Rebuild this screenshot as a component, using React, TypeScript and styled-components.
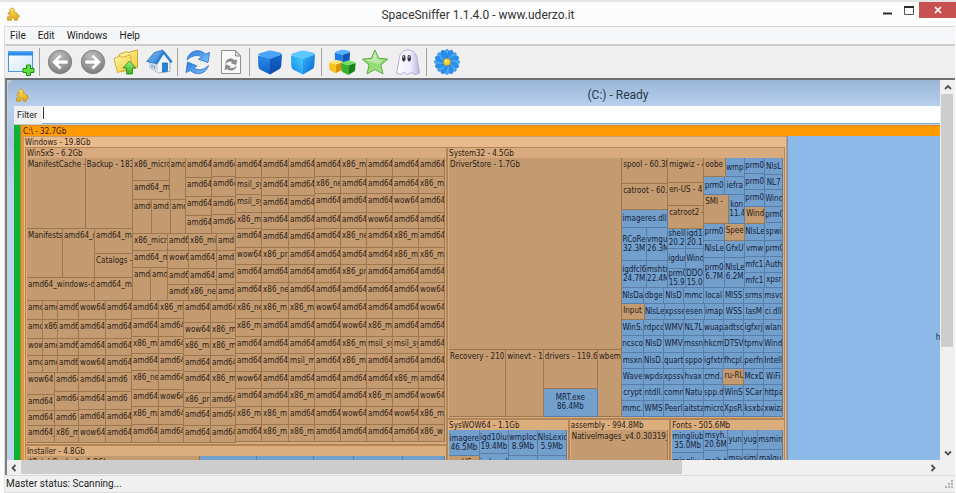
import React from 'react';
import styled, { createGlobalStyle, css } from 'styled-components';

const uiFont = 'Roboto, "Open Sans", sans-serif';
const mapFont = '"DejaVu Sans Condensed", "DejaVu Sans", sans-serif';

const GlobalStyle = createGlobalStyle`
  *, *::before, *::after { box-sizing: border-box; }
  html, body { margin: 0; padding: 0; }
  body { background: #f0f0f0; font-family: ${uiFont}; color: #1d1d1d; }
  button, input { font: inherit; color: inherit; border: 0; padding: 0; margin: 0; background: none; border-radius: 0; }
  button { cursor: default; }
`;

/* ---------- application frame ---------- */

const Frame = styled.div`
  display: flex;
  flex-direction: column;
  height: 100vh;
  overflow: hidden;
  border-top: 2px solid #e4e4e4;
  background: #fcfcfc;
`;

const TitleBar = styled.header`
  display: grid;
  grid-template-columns: 80px 1fr 80px;
  align-items: start;
  height: 24px;
  flex: none;
`;

const TitleIcon = styled.div`
  padding: 5px 0 0 6px;
  line-height: 0;
`;

const Title = styled.h1`
  margin: 0;
  padding-top: 4px;
  text-align: center;
  font-size: 12px;
  font-weight: 400;
  line-height: 18px;
  color: #333;
`;

const WindowButtons = styled.div`
  display: flex;
  justify-content: flex-end;
  height: 16px;
`;

const WindowButton = styled.button<{ $close?: boolean }>`
  display: flex;
  align-items: center;
  justify-content: center;
  width: ${p => (p.$close ? 37 : 21)}px;
  background: ${p => (p.$close ? '#c75050' : 'transparent')};
`;

const Client = styled.div`
  display: flex;
  flex-direction: column;
  flex: 1;
  min-height: 0;
  margin: 0 1px 0 4px;
  border-left: 1px solid #dcdfe2;
  border-top: 1px solid #d5d8da;
`;

const MenuBar = styled.nav`
  display: flex;
  flex: none;
  height: 17px;
  background: #f5f6f8;
`;

const MenuItem = styled.button`
  padding: 0 5px;
  margin-right: 2px;
  font-size: 10px;
  line-height: 16px;
`;

const Toolbar = styled.div`
  display: flex;
  align-items: center;
  flex: none;
  height: 34px;
  border-top: 2px solid #cbcccd;
  background: #efefef;
`;

const ToolButton = styled.button`
  display: flex;
  align-items: center;
  justify-content: center;
  width: 33px;
  height: 30px;
  padding: 0 2px 1px 0;
`;

const Separator = styled.span`
  width: 1px;
  height: 28px;
  margin: 0 4px 0 1px;
  background: #a3a3a3;
`;

/* ---------- workspace with its scroll bars ---------- */

const Workspace = styled.main`
  display: grid;
  grid-template-columns: minmax(0, 1fr) 15px;
  grid-template-rows: minmax(0, 1fr) 15px;
  flex: 1;
  min-height: 0;
  border-top: 2px solid #6c6f73;
  border-left: 2px solid #7d8083;
  background: #f0f0f0;
`;

const Viewport = styled.div`
  overflow: hidden;
  background: #c9cdd2;
`;

const ScrollBar = styled.div<{ $vertical?: boolean }>`
  display: flex;
  flex-direction: ${p => (p.$vertical ? 'column' : 'row')};
  background: #f0f0f0;
`;

const ScrollArrow = styled.button`
  display: flex;
  align-items: center;
  justify-content: center;
  flex: 0 0 14px;
`;

const ScrollTrack = styled.div<{ $vertical?: boolean }>`
  display: flex;
  flex: 1;
  flex-direction: ${p => (p.$vertical ? 'column' : 'row')};
  ${p => (p.$vertical ? 'padding: 0 2px 0 1px;' : 'padding-bottom: 1px;')}
`;

const Thumb = styled.div<{ $share: number }>`
  flex: 0 0 ${p => p.$share}%;
  background: #cdcdcd;
`;

const StatusBar = styled.footer`
  display: flex;
  align-items: center;
  justify-content: space-between;
  flex: none;
  height: 18px;
  padding: 0 1px;
  border-top: 1px solid #dadada;
  border-bottom: 1px solid #dcdcdc;
  background: #f0f0f0;
  font-size: 10px;
  line-height: 16px;
`;

/* ---------- drive window ---------- */

const ChildWindow = styled.section`
  width: 1220px;
  margin-left: 1px;
  padding: 0 6px 6px;
  border-radius: 6px 0 0 0;
  background: linear-gradient(#9ab6d4, #b6d0ee 26px, #a9c4e2 60px, #bdd3ec 110px);
`;

const ChildTitle = styled.header`
  display: grid;
  grid-template-columns: 80px 1fr 80px;
  align-items: center;
  height: 26px;
  padding-top: 4px;
`;

const ChildIcon = styled.div`
  padding-left: 1px;
  line-height: 0;
`;

const ChildName = styled.h2`
  margin: 0;
  text-align: center;
  font-size: 12px;
  font-weight: 400;
  line-height: 18px;
  color: #27384a;
`;

const FilterRow = styled.div`
  display: flex;
  height: 19px;
  background: #fff;
  border-bottom: 1px solid #c9c9c9;
`;

const FilterLabel = styled.label`
  width: 28px;
  padding-left: 3px;
  background: #f0f0f0;
  font-size: 9px;
  line-height: 18px;
`;

const FilterField = styled.div`
  display: flex;
  flex: 1;
  padding: 1px 0 0 1px;
  border-bottom: 1px solid #7fb0dc;
`;

const Caret = styled.span`
  width: 1px;
  height: 12px;
  background: #333;
`;

const FilterInput = styled.input`
  flex: 1;
  font-size: 10px;
  outline: none;
`;

const DriveArea = styled.div`
  display: flex;
  height: 425px;
`;

const FreeSpaceBar = styled.div`
  width: 7px;
  border-right: 1px solid #7fa050;
  background: #10b12f;
`;

/* ---------- treemap ---------- */

type Kind = 'dir' | 'file';
type Tone = 'drive' | 'outer' | 'inner' | 'deep';
type MapNode =
  | { type: 'split'; size: number; dir: 'row' | 'column'; kids: MapNode[] }
  | { type: 'folder'; size: number; label: string; tone: Tone; kids: MapNode[] }
  | { type: 'cell'; size: number; kind: Kind; label?: string; sub?: string };

const grow = css<{ $size: number }>`
  flex: ${p => p.$size} ${p => p.$size} 0px;
  min-width: 0;
  min-height: 0;
`;

const Split = styled.div<{ $size: number; $dir: 'row' | 'column' }>`
  ${grow}
  display: flex;
  flex-direction: ${p => p.$dir};
`;

const tones: Record<Tone, { fill: string; line: string }> = {
  drive: { fill: '#ff9a05', line: '#dd9030' },
  outer: { fill: '#e9ba8b', line: '#c8986a' },
  inner: { fill: '#d8aa7d', line: '#b08658' },
  deep: { fill: '#dcad7d', line: '#b08658' },
};

const Folder = styled.div<{ $size: number; $tone: Tone }>`
  ${grow}
  display: flex;
  flex-direction: column;
  padding: 0 2px 2px;
  background: ${p => tones[p.$tone].fill};
  box-shadow: inset 0 0 0 1px ${p => tones[p.$tone].line};
`;

const FolderName = styled.div`
  flex: none;
  height: 11px;
  padding-top: 2px;
  white-space: nowrap;
  font-size: 8px;
  line-height: 9px;
`;

const FolderBody = styled.div`
  display: flex;
  flex: 1;
  min-height: 0;
`;

const Cell = styled.div<{ $size: number; $kind: Kind }>`
  ${grow}
  display: flex;
  flex-direction: column;
  justify-content: ${p => (p.$kind === 'file' ? 'center' : 'flex-start')};
  overflow: hidden;
  white-space: nowrap;
  font-size: 8px;
  line-height: 9px;
  text-align: ${p => (p.$kind === 'file' ? 'center' : 'left')};
  padding: ${p => (p.$kind === 'file' ? '0' : '2px 0 0 1px')};
  color: ${p => (p.$kind === 'file' ? '#14233a' : '#2b2014')};
  background: ${p => (p.$kind === 'file' ? '#739fcd' : '#c49b71')};
  border: solid ${p => (p.$kind === 'file' ? '#587fa9' : '#9c7850')};
  border-width: 0 1px 1px 0;
`;

const CellName = styled.span`
  flex: none;
  overflow: hidden;
`;

const BigFile = styled.div<{ $size: number }>`
  ${grow}
  display: flex;
  flex-direction: column;
  align-items: center;
  justify-content: center;
  border-left: 1px solid #6c95bf;
  background: #8cb9e8;
  font-size: 8px;
  line-height: 9px;
  color: #1c2c40;
`;

const DriveMap = styled.div`
  display: flex;
  flex: 1;
  min-width: 0;
  font-family: ${mapFont};
  color: #2b2014;
`;

const row = (size: number, ...kids: MapNode[]): MapNode => ({ type: 'split', size, dir: 'row', kids });
const col = (size: number, ...kids: MapNode[]): MapNode => ({ type: 'split', size, dir: 'column', kids });
const dir = (size: number, label?: string): MapNode => ({ type: 'cell', size, kind: 'dir', label });
const file = (size: number, label?: string, sub?: string): MapNode => ({ type: 'cell', size, kind: 'file', label, sub });
const folder = (size: number, label: string, tone: Tone, ...kids: MapNode[]): MapNode => ({
  type: 'folder', size, label, tone, kids,
});

/* A column of equal-width cells; names starting with "*" are folders among files. */
const stack = (size: number, kind: Kind, heights: number[], names: string): MapNode =>
  col(
    size,
    ...names.split(' ').map((name, i): MapNode =>
      name.startsWith('*')
        ? dir(heights[i], name.slice(1))
        : { type: 'cell', size: heights[i], kind, label: name }
    )
  );

const line = (height: number, names: string): MapNode => {
  const widths = [22, 20, 20, 20, 20, 20, 20, 19];
  return row(
    height,
    ...names.split(' ').map((name, i) => (name.startsWith('*') ? dir(widths[i], name.slice(1)) : file(widths[i], name)))
  );
};

const upperA = [20, 17, 18, 16, 19, 17, 18, 18];
const upperB = [21, 17, 17, 17, 18, 17, 18, 18];
const upperC = [19, 17, 19, 16, 19, 17, 18, 18];
const lower = [18, 18, 17, 18, 17, 18, 18, 17];
const leftLow = [19, 19, 17, 17, 19, 18, 16, 16];
const midLow = [18, 18, 17, 17, 19, 17, 18, 17];
const sideLow = [22, 16, 17, 16, 21, 15, 18, 16];

const winSxS = folder(
  297, 'WinSxS - 6.2Gb', 'inner',
  col(
    209,
    row(
      143,
      col(
        106,
        row(71, dir(59, 'ManifestCache -'), dir(47, 'Backup - 183')),
        row(
          72,
          col(68, row(51, dir(36, 'Manifests'), dir(32, 'amd64_m')), dir(21, 'amd64_windows-d')),
          col(38, dir(25, 'amd64_mi'), dir(24, 'Catalogs -'), dir(23, 'amd64_mi'))
        )
      ),
      col(
        103,
        row(
          76,
          col(
            53,
            row(42, stack(38, 'dir', [23, 19], 'x86_micro amd64_m'), dir(15, 'amd')),
            row(34, dir(19, 'amd6'), dir(19, 'amd'), dir(15, 'amd'))
          ),
          stack(26, 'dir', [20, 19, 19, 18], 'amd64 amd64 amd64 amd64'),
          stack(24, 'dir', [19, 20, 18, 19], 'amd64 amd64 amd64 amd64')
        ),
        row(
          67,
          col(35, stack(34, 'dir', [17, 17], 'x86_micr amd64_m'), row(33, dir(18, 'amd'), dir(17, 'amd'))),
          stack(21, 'dir', [17, 18, 16, 16], 'amd6 wow6 amd6 amd6'),
          stack(28, 'dir', [17, 18, 16, 16], 'x86_mi amd64_ amd64_ x86_net'),
          stack(19, 'dir', [17, 18, 16, 16], 'amd amd amd amd')
        )
      )
    ),
    row(
      141,
      col(
        52,
        row(
          72,
          stack(16, 'dir', [19, 19, 17, 17], 'amc amc wow amc'),
          stack(15, 'dir', [19, 19, 17, 17], 'amc x86 amc amc'),
          stack(21, 'dir', [19, 19, 17, 17], 'amd6 amd6 amd6 amd6')
        ),
        row(
          69,
          stack(28, 'dir', [22, 16, 15, 16], 'wow64 amd64_ amd64_ amd64_'),
          stack(24, 'dir', [19, 19, 15, 16], 'amd64 amd64 amd6 x86_m')
        )
      ),
      stack(27, 'dir', leftLow, 'wow64 amd64 amd64_ wow64 amd64_ amd64_ amd64 wow64'),
      stack(26, 'dir', leftLow, 'amd64 amd64 amd64 amd64 amd6 amd6 amd64 amd64'),
      stack(27, 'dir', midLow, 'amd64_ amd64_ x86_mi amd64_ x86_ne amd64_ x86_mi amd64_'),
      stack(25, 'dir', midLow, 'x86_m amd64 amd64 amd64 amd64 wow64 amd64 amd64'),
      stack(27, 'dir', sideLow, 'amd64 wow64 x86_mi amd64_ amd64_ x86_pr amd64_ amd64_'),
      stack(25, 'dir', sideLow, 'amd64 x86_m x86_m amd64 x86_m amd64 amd64 amd64')
    )
  ),
  stack(26, 'dir', [...upperA, ...lower],
    'amd64_ msil_sy msil_sy x86_mi amd64_ wow64 amd64_ amd64_ x86_ne x86_mi amd64_ amd64_ wow64 amd64_ x86_mi amd64_'),
  stack(27, 'dir', [...upperB, ...lower],
    'amd64 amd64 amd64 amd64 amd64 x86_pr amd64 x86_ne x86_m amd64 amd64 amd64 amd64 amd64 x86_m x86_m'),
  stack(26, 'dir', [...upperB, ...lower],
    'amd64_ amd64_ amd64_ amd64_ amd64_ amd64_ amd64_ amd64_ x86_m amd64 amd64 msil_m amd64 x86_m amd64 x86_m'),
  stack(26, 'dir', [...upperC, ...lower],
    'amd64 x86_ne amd64 amd64 amd64 amd64 amd64 amd64 wow64 amd64 amd64 amd64 amd64 amd64 amd64 amd64'),
  stack(26, 'dir', [...upperC, ...lower],
    'x86_mi amd64_ amd64_ amd64_ x86_ne amd64_ x86_pn amd64_ amd64_ wow64 x86_mi x86_mi amd64_ amd64_ wow64 amd64_'),
  stack(26, 'dir', [...upperC, ...lower],
    'amd64 amd64 amd64 wow64 amd64 amd64 amd64 amd64 amd64 x86_m msil_sy amd64 amd64 x86_m amd64 amd64'),
  stack(26, 'dir', [...upperC, ...lower],
    'amd64 amd64 wow64 amd64 x86_m x86_m amd64_ amd64_ amd64 amd64 msil_sy amd64 x86_m amd64 wow64 amd64'),
  stack(26, 'dir', [...upperC, ...lower],
    'amd64 x86_m amd64 amd64 amd64 x86_m amd64 wow64 wow64 amd64 amd64 amd64 amd64 wow64 x86_m x86_w')
);

const installer = folder(
  100, 'Installer - 4.8Gb', 'deep',
  dir(174, '$PatchCache$ - 1.8Gb'), file(57), file(57), file(39), file(49), file(42)
);

const system32 = folder(
  270, 'System32 - 4.5Gb', 'inner',
  col(
    173,
    dir(190, 'DriverStore - 1.7Gb'),
    row(
      67,
      dir(57, 'Recovery - 210.'),
      dir(37, 'winevt - 1'),
      col(56, dir(38, 'drivers - 119.6M'), file(29, 'MRT.exe', '86.4Mb')),
      dir(23, 'wbem')
    )
  ),
  col(
    161,
    row(
      129,
      col(
        46,
        dir(24, 'spool - 60.3M'),
        dir(24, 'catroot - 60.3'),
        file(18, 'imageres.dll'),
        row(35, file(25, 'RCoRe', '32.3M'), file(21, 'vmgu', '26.3M')),
        row(28, file(25, 'igdfcl6', '24.7M'), file(21, 'mshtr', '22.4M'))
      ),
      col(
        36,
        dir(23, 'migwiz - 4'),
        dir(22, 'en-US - 4'),
        dir(21, 'catroot2 -'),
        row(21, file(18, 'shell', '20.2'), file(18, 'igd1', '20.1')),
        row(22, file(18, 'igdur'), file(18, 'Wind')),
        row(20, file(18, 'prm0', '15.9'), file(18, 'DDO', '15.0'))
      ),
      col(
        41,
        row(19, dir(21, 'oobe'), file(20, 'wmp')),
        row(18, file(21, 'prm0'), file(20, 'iefra')),
        row(28, dir(25, 'SMI -'), file(16, 'kon', '11.4')),
        row(17, file(21, 'prm0'), dir(20, 'Spee')),
        row(17, file(21, 'NlsLe'), file(20, 'GfxU')),
        row(30, file(21, 'prm0', '6.7M'), file(20, 'NlsLe', '6.2M'))
      ),
      stack(20, 'file', [16, 16, 17, 15, 18, 16, 16, 15], 'prm0 prm0 prm0 *Wind NlsLe vmw mfc11 mfc11'),
      stack(18, 'file', [17, 15, 17, 16, 17, 16, 16, 15], 'NlsL NL7 Wind prm0 spwi prm0 Auth xpsr')
    ),
    line(16, 'NlsDa dbge NlsD mmc local MISS srms msvc'),
    line(16, '*Input NlsLe xpsse esen imap WSS IasM ci.dll'),
    line(16, 'WinS. rdpcc WMV NL7L wuap adtsc igfxrj wlan'),
    line(16, 'ncsco NlsD WMV mssn hkcm DTSV tpmv Wind'),
    line(16, 'msxn NlsD. quart sppo igfxtr fhcpl. perfn Intelli'),
    line(16, 'Wave wpds xpssv hvax cmd. *ru-RU McxD WiFi'),
    line(16, 'crypt ntdll. comn Natu spp.d WinS SCar httpa'),
    line(16, 'mmc. WMS Peerl aitsta micro XpsR. ksxba xwiza')
  )
);

const sysWow = folder(
  122, 'SysWOW64 - 1.1Gb', 'deep',
  col(31, file(26, 'imagere', '46.5Mb'), dir(88, 'en-US')),
  col(29, file(24, 'igd10iur', '19.4Mb'), file(17, 'igdumdi'), file(73)),
  col(29, file(25, 'wmploc', '8.9Mb'), file(89)),
  col(29, file(25, 'NlsLexic', '5.9Mb'), file(89))
);

const assembly = folder(101, 'assembly - 994.8Mb', 'deep', dir(97, 'NativeImages_v4.0.30319_'));

const fonts = folder(
  115, 'Fonts - 505.6Mb', 'deep',
  col(32, file(23, 'mingliub.', '35.0Mb'), file(17, 'mingliu_m'), file(74)),
  col(24, file(21, 'msyh.', '20.6M'), file(20, 'msjh.t'), file(73)),
  col(15, file(19, 'yun'), file(18, 'msy'), file(77)),
  col(15, file(19, 'yug'), file(18, 'simli'), file(77)),
  col(25, file(19, 'msmin'), file(18, 'malgu'), file(77))
);

const windows = folder(
  764, 'Windows - 19.8Gb', 'outer',
  col(422, winSxS, installer),
  col(338, system32, row(127, sysWow, assembly, fonts))
);

function MapView({ node }: { node: MapNode }) {
  if (node.type === 'split') {
    return (
      <Split $size={node.size} $dir={node.dir}>
        {node.kids.map((k, i) => <MapView key={i} node={k} />)}
      </Split>
    );
  }
  if (node.type === 'folder') {
    return (
      <Folder $size={node.size} $tone={node.tone}>
        <FolderName>{node.label}</FolderName>
        <FolderBody>{node.kids.map((k, i) => <MapView key={i} node={k} />)}</FolderBody>
      </Folder>
    );
  }
  return (
    <Cell $size={node.size} $kind={node.kind}>
      {node.label && <CellName>{node.label}</CellName>}
      {node.sub && <CellName>{node.sub}</CellName>}
    </Cell>
  );
}

/* ---------- icons ---------- */

const Svg = ({ size = 28, children }: { size?: number; children: React.ReactNode }) => (
  <svg width={size} height={size} viewBox={`0 0 ${size} ${size}`} aria-hidden="true">{children}</svg>
);

const HiddenDefs = styled.svg`
  display: block;
`;

const Gradients = () => (
  <HiddenDefs width="0" height="0" aria-hidden="true">
    <defs>
      <linearGradient id="gold" x1="0" y1="0" x2="0" y2="1"><stop offset="0" stopColor="#ffe65a" /><stop offset="1" stopColor="#dda51c" /></linearGradient>
      <linearGradient id="pale" x1="0" y1="0" x2="1" y2="1"><stop offset="0" stopColor="#ffffff" /><stop offset="1" stopColor="#cfe6fb" /></linearGradient>
      <radialGradient id="grey" cx="0.45" cy="0.3" r="0.7"><stop offset="0" stopColor="#c2c2c2" /><stop offset="1" stopColor="#7d7d7d" /></radialGradient>
      <linearGradient id="folder" x1="0" y1="0" x2="1" y2="1"><stop offset="0" stopColor="#fff6a8" /><stop offset="1" stopColor="#eec93c" /></linearGradient>
      <linearGradient id="leaf" x1="0" y1="0" x2="0" y2="1"><stop offset="0" stopColor="#a6f07a" /><stop offset="1" stopColor="#2fae22" /></linearGradient>
      <linearGradient id="arrow" x1="0" y1="0" x2="1" y2="1"><stop offset="0" stopColor="#2b7ae0" /><stop offset="1" stopColor="#7cc2fb" /></linearGradient>
      <linearGradient id="roof" x1="0" y1="0" x2="1" y2="1"><stop offset="0" stopColor="#7dbcf5" /><stop offset="1" stopColor="#2f80d6" /></linearGradient>
      <linearGradient id="star" x1="0" y1="0" x2="0" y2="1"><stop offset="0" stopColor="#d2f3bf" /><stop offset="0.5" stopColor="#8bd96c" /><stop offset="1" stopColor="#a5e488" /></linearGradient>
      <linearGradient id="ghost" x1="0" y1="0" x2="1" y2="0"><stop offset="0" stopColor="#ffffff" /><stop offset="0.6" stopColor="#eeecfc" /><stop offset="1" stopColor="#b9b4e2" /></linearGradient>
      <linearGradient id="cubeLeft" x1="0" y1="0" x2="0" y2="1"><stop offset="0" stopColor="#2c8bea" /><stop offset="1" stopColor="#0f62c8" /></linearGradient>
      <linearGradient id="cubeRight" x1="0" y1="0" x2="0" y2="1"><stop offset="0" stopColor="#1367cc" /><stop offset="1" stopColor="#0b48a4" /></linearGradient>
      <linearGradient id="glowLeft" x1="0" y1="1" x2="1" y2="0"><stop offset="0" stopColor="#0b84ee" /><stop offset="1" stopColor="#4fd0ff" /></linearGradient>
      <linearGradient id="glowRight" x1="1" y1="1" x2="0" y2="0"><stop offset="0" stopColor="#0863cf" /><stop offset="1" stopColor="#35b4fb" /></linearGradient>
    </defs>
  </HiddenDefs>
);

const PuzzleIcon = () => (
  <Svg size={14}>
    <path d="M4.500 5.500C3 3 4 1.200 6 1.200S9 3 8 5.300l2.800.5.200 2c1.500-.4 2.300.4 2.300 1.500s-.8 1.700-2 1.500v2.400H8.300c.3-1.600-.2-2.400-1.300-2.400s-1.600.8-1.400 2.400H1.500V9.800c1.700.2 2.300-.4 2.300-1.200S3.200 7.300 2 7.500l.2-1.800z" fill="url(#gold)" stroke="#c79420" strokeWidth="0.8" />
  </Svg>
);

const NewWindowIcon = () => (
  <Svg>
    <rect x="1.500" y="3.500" width="24" height="20" fill="url(#pale)" stroke="#4b93da" />
    <rect x="1" y="3" width="25" height="4.500" fill="#2f8be6" />
    <rect x="1" y="3" width="25" height="1.500" fill="#56abf5" />
    <path d="M19.500 17h4v3.500H27v4h-3.500V27.500h-4v-3H16v-4h3.500z" fill="#5ee03a" stroke="#1d8c1d" />
  </Svg>
);

const CircleArrow = ({ forward }: { forward?: boolean }) => (
  <Svg>
    <circle cx="14" cy="14" r="11.700" fill="url(#grey)" stroke="#777" strokeWidth="0.8" />
    <path
      transform={forward ? 'rotate(180 14 14)' : undefined}
      d="M13.600 6.200 5.800 14l7.800 7.800 2.300-2.300-3.400-3.500H22v-4h-9.500l3.400-3.500z" fill="#fff" stroke="#8d8d8d" strokeWidth="0.6" />
  </Svg>
);

const FolderUpIcon = () => (
  <Svg>
    <path d="M7 6.500 14.500 3.500l1.500 1L25.500 2v17.500L9 24z" fill="url(#folder)" stroke="#d3a62b" />
    <path d="M2 10.500 8 8l2 1.500 8.500-2.500 1.500 13L5.500 24.500z" fill="url(#folder)" stroke="#d9b03a" />
    <path d="m17.500 13 6.500 7h-3.500v6h-6v-6H11z" fill="url(#leaf)" stroke="#2b9420" strokeWidth="0.9" />
  </Svg>
);

const HomeIcon = () => (
  <Svg>
    <path d="M4.500 12v7.500L13 25l12-1.500V12L18 4z" fill="#eef2f7" stroke="#9aa6b3" strokeWidth="0.8" />
    <path d="M4.500 12v7.500L13 25V13z" fill="#d3dce6" />
    <path d="m1.500 13.500 8-9L18 2l-7 13.500z" fill="url(#roof)" stroke="#2b6fb8" strokeWidth="0.8" strokeLinejoin="round" />
    <path d="m11.500 15 7-11L26 13.500" fill="none" stroke="#2f7fd3" strokeWidth="2.600" strokeLinejoin="round" strokeLinecap="round" />
    <path d="M17.500 15h5v8.300l-5 .7z" fill="#2583de" stroke="#1c62a8" strokeWidth="0.7" />
    <path d="M7 16.500v3.500M9.500 17.500V21" stroke="#6d9dcb" strokeWidth="1.200" />
  </Svg>
);

const RefreshShape = ({ fill, stroke }: { fill: string; stroke: string }) => (
  <>
    <path d="M3 12C4 5.500 10 1.500 16 3c2.200.5 4 1.500 5.300 3l4.200-1.500-1.500 10-9.500-3.300 3.200-2.200C14.500 6.500 8 7 3 12z" fill={fill} stroke={stroke} strokeWidth="0.8" />
    <path d="M24.500 17.500C23 23.500 17 27 11 25.200c-2-.6-3.500-1.500-4.700-2.700L2 24.500 3.500 14l9.500 4-3.300 1.900c3.800 2.800 9.800 2.600 14.800-2.400z" fill={fill} stroke={stroke} strokeWidth="0.8" />
  </>
);

const RefreshIcon = () => <Svg><RefreshShape fill="url(#arrow)" stroke="#2a72c4" /></Svg>;

const PageRefreshIcon = () => (
  <Svg>
    <path d="M4.500 2.500h14l5 5.500v17.500h-19z" fill="#fafafa" stroke="#8d8d8d" />
    <path d="M18.500 2.500V8h5z" fill="#ddd" stroke="#8d8d8d" />
    <g transform="translate(7 9.500) scale(0.5)"><RefreshShape fill="#8c8c8c" stroke="#666" /></g>
  </Svg>
);

const CubeShape = ({ top, left, right }: { top: string; left: string; right: string }) => (
  <>
    <path d="M14 26.500 4 21.500Q2.500 20.500 2.300 18L2 7.500 14 10z" fill={left} />
    <path d="M14 26.500 23.500 21Q25 20 25.300 17.500L26 6.500 14 10z" fill={right} />
    <path d="M2 7q0-1 2-1.700l8-2.500q2-.5 4 0l8.500 2q1.500.5 1.500 1.700L14 11z" fill={top} />
  </>
);

const CubeIcon = () => <Svg><CubeShape top="#4ba4f7" left="url(#cubeLeft)" right="url(#cubeRight)" /></Svg>;

const GlowCubeIcon = () => (
  <Svg><CubeShape top="#5cc8ff" left="url(#glowLeft)" right="url(#glowRight)" /></Svg>
);

const CubesIcon = () => (
  <Svg>
    <g transform="translate(5.500 0) scale(0.64)"><CubeShape top="#5ab0ff" left="#1e7be2" right="#0e57b8" /></g>
    <g transform="translate(0 10.500) scale(0.56)"><CubeShape top="#ffe477" left="#fbc31f" right="#dc9407" /></g>
    <g transform="translate(12 11) scale(0.6)"><CubeShape top="#74dd6a" left="#36b32f" right="#1a821c" /></g>
  </Svg>
);

const StarIcon = () => (
  <Svg>
    <path d="m14 2 3.600 8.300 9 .8-6.700 6L22 26l-8-4.600L6 26l2-8.900-6.700-6 9-.8z" fill="url(#star)" stroke="#5aa945" strokeLinejoin="round" />
    <path d="m14 5.500 2.600 6 6 .6-4.600 3.900L8 14l-3-2.400 6.400-.2z" fill="#fff" opacity="0.35" />
  </Svg>
);

const GhostIcon = () => (
  <Svg>
    <path d="M5 13C5 6 8.500 2 14 2s9 4 9.500 11l2 12-4.500 1.500-3.500-2-4 2-4-2-3 2L2.500 25z" fill="url(#ghost)" stroke="#aaa5d4" strokeWidth="0.9" />
    <ellipse cx="9.800" cy="10.300" rx="1.700" ry="3.300" fill="#35354a" />
    <ellipse cx="15.200" cy="10.300" rx="1.700" ry="3.300" fill="#35354a" />
    <circle cx="9.500" cy="9" r="0.7" fill="#fff" />
    <circle cx="15" cy="9" r="0.7" fill="#fff" />
  </Svg>
);

const FlowerIcon = () => (
  <Svg>
    <circle cx="14" cy="14" r="11" fill="#2c8eea" />
    {Array.from({ length: 16 }, (_, i) => (
      <ellipse key={i} cx="14" cy="6.500" rx="2.400" ry="5.200" fill={i % 2 ? '#2a8eec' : '#48a8f6'} stroke="#1c74d0" strokeWidth="0.4" transform={`rotate(${i * 22.5} 14 14)`} />
    ))}
    <circle cx="14" cy="14" r="3.500" fill="#f6d02c" stroke="#b99312" strokeWidth="0.6" />
    <circle cx="13" cy="13" r="1.200" fill="#fff0a0" />
  </Svg>
);

const chevrons = { up: 'M2 7 5 4l3 3', down: 'M2 3.500l3 3 3-3', left: 'M6.500 2l-3 3 3 3', right: 'M3.500 2l3 3-3 3' };
const Chevron = ({ to }: { to: keyof typeof chevrons }) => (
  <Svg size={10}><path d={chevrons[to]} fill="none" stroke="#505050" strokeWidth="1.800" /></Svg>
);

const tools: { name: string; icon: React.ReactNode; group?: boolean }[] = [
  { name: 'New view', icon: <NewWindowIcon />, group: true },
  { name: 'Back', icon: <CircleArrow /> },
  { name: 'Forward', icon: <CircleArrow forward /> },
  { name: 'Parent folder', icon: <FolderUpIcon /> },
  { name: 'Home', icon: <HomeIcon />, group: true },
  { name: 'Rescan', icon: <RefreshIcon /> },
  { name: 'Refresh file', icon: <PageRefreshIcon />, group: true },
  { name: 'Less detail', icon: <CubeIcon /> },
  { name: 'More detail', icon: <GlowCubeIcon />, group: true },
  { name: 'File classes', icon: <CubesIcon /> },
  { name: 'Free space', icon: <StarIcon /> },
  { name: 'Unknown space', icon: <GhostIcon />, group: true },
  { name: 'Configure', icon: <FlowerIcon /> },
];

export default function App() {
  return (
    <>
      <GlobalStyle />
      <Gradients />
      <Frame>
        <TitleBar>
          <TitleIcon><PuzzleIcon /></TitleIcon>
          <Title>SpaceSniffer 1.1.4.0 - www.uderzo.it</Title>
          <WindowButtons>
            <WindowButton aria-label="Minimize">
              <Svg size={12}><path d="M1 9.500h9" stroke="#2a2a2a" strokeWidth="2" /></Svg>
            </WindowButton>
            <WindowButton aria-label="Maximize">
              <Svg size={12}><path d="M1.500 2v8.500h9V2" fill="none" stroke="#555" /><path d="M1 3h10" stroke="#2a2a2a" strokeWidth="2" /></Svg>
            </WindowButton>
            <WindowButton $close aria-label="Close">
              <Svg size={10}><path d="m2 2 6 6M8 2 2 8" stroke="#fff" strokeWidth="1.700" /></Svg>
            </WindowButton>
          </WindowButtons>
        </TitleBar>
        <Client>
          <MenuBar>
            {['File', 'Edit', 'Windows', 'Help'].map(m => <MenuItem key={m}>{m}</MenuItem>)}
          </MenuBar>
          <Toolbar role="toolbar">
            {tools.map(t => (
              <React.Fragment key={t.name}>
                <ToolButton aria-label={t.name}>{t.icon}</ToolButton>
                {t.group && <Separator />}
              </React.Fragment>
            ))}
          </Toolbar>
          <Workspace>
            <Viewport>
              <ChildWindow>
                <ChildTitle>
                  <ChildIcon><PuzzleIcon /></ChildIcon>
                  <ChildName>(C:) - Ready</ChildName>
                </ChildTitle>
                <FilterRow>
                  <FilterLabel htmlFor="filter">Filter</FilterLabel>
                  <FilterField>
                    <Caret />
                    <FilterInput id="filter" type="text" />
                  </FilterField>
                </FilterRow>
                <DriveArea>
                  <FreeSpaceBar />
                  <DriveMap>
                    <Folder $size={1} $tone="drive">
                      <FolderName>C:\ - 32.7Gb</FolderName>
                      <FolderBody>
                        <MapView node={windows} />
                        <BigFile $size={336}>
                          <span>hiberfil.sys</span>
                          <span>6.3Gb</span>
                        </BigFile>
                        <BigFile $size={97} />
                      </FolderBody>
                    </Folder>
                  </DriveMap>
                </DriveArea>
              </ChildWindow>
            </Viewport>
            <ScrollBar $vertical>
              <ScrollArrow aria-label="Scroll up"><Chevron to="up" /></ScrollArrow>
              <ScrollTrack $vertical><Thumb $share={72} /></ScrollTrack>
              <ScrollArrow aria-label="Scroll down"><Chevron to="down" /></ScrollArrow>
            </ScrollBar>
            <ScrollBar>
              <ScrollArrow aria-label="Scroll left"><Chevron to="left" /></ScrollArrow>
              <ScrollTrack><Thumb $share={73} /></ScrollTrack>
              <ScrollArrow aria-label="Scroll right"><Chevron to="right" /></ScrollArrow>
            </ScrollBar>
          </Workspace>
          <StatusBar>
            <span>Master status: Scanning...</span>
            <Svg size={10}>
              {[[7, 1], [4, 4], [7, 4], [1, 7], [4, 7], [7, 7]].map(([x, y]) => (
                <rect key={`${x}-${y}`} x={x} y={y} width="2" height="2" fill="#b4b4b4" />
              ))}
            </Svg>
          </StatusBar>
        </Client>
      </Frame>
    </>
  );
}
